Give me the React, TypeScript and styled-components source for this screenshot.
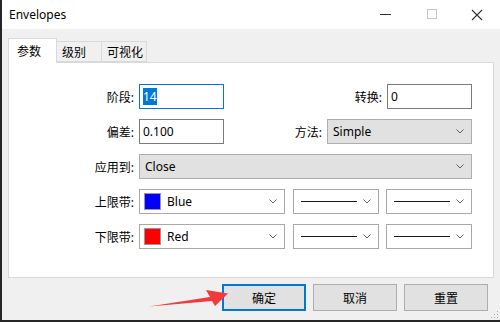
import React from 'react';
import styled, { createGlobalStyle } from 'styled-components';

const GlobalStyle = createGlobalStyle`
  html, body {
    margin: 0;
    padding: 0;
    overflow: hidden;
  }
  body {
    font-family: "Noto Sans", "Noto Sans CJK SC", sans-serif;
    font-size: 12px;
    color: #000;
  }
`;

const Chevron = () => (
  <svg width='8' height='5' viewBox='0 0 8 5'>
    <polyline points='0.5,0.5 4,4 7.5,0.5' fill='none' stroke='#606060' strokeWidth='1' />
  </svg>
);

const App = () => {
  return (
    <>
      <GlobalStyle />
      <Screen>
        <Window>
          <TitleBar>
            <Title>Envelopes</Title>
            <Controls>
              <ControlButton>
                <svg width='11' height='11' viewBox='0 0 11 11'>
                  <line x1='0' y1='5.5' x2='11' y2='5.5' stroke='#333' strokeWidth='1' />
                </svg>
              </ControlButton>
              <ControlButton>
                <svg width='11' height='11' viewBox='0 0 11 11'>
                  <rect x='1.5' y='0.5' width='9' height='9' fill='none' stroke='#c4c4c4' strokeWidth='1' />
                </svg>
              </ControlButton>
              <ControlButton>
                <svg width='12' height='12' viewBox='0 0 12 12'>
                  <path d='M1 1 L11 11 M11 1 L1 11' stroke='#333' strokeWidth='1.1' />
                </svg>
              </ControlButton>
            </Controls>
          </TitleBar>

          <Body>
            <Tabs>
              <Tab $active $width={49}>参数</Tab>
              <Tab $width={45}>级别</Tab>
              <Tab $width={45}>可视化</Tab>
            </Tabs>

            <Panel>
              <Form>
                <Label>阶段:</Label>
                <Field>
                  <TextBox $focused>
                    <Selected>14</Selected>
                  </TextBox>
                  <Group>
                    <Label>转换:</Label>
                    <TextBox>0</TextBox>
                  </Group>
                </Field>

                <Label>偏差:</Label>
                <Field>
                  <TextBox>0.100</TextBox>
                  <Group>
                    <Label>方法:</Label>
                    <Combo $width={145}>
                      <span>Simple</span>
                      <Chevron />
                    </Combo>
                  </Group>
                </Field>

                <Label>应用到:</Label>
                <Field>
                  <Combo $width={333}>
                    <span>Close</span>
                    <Chevron />
                  </Combo>
                </Field>

                <Label>上限带:</Label>
                <Field>
                  <PickBox $width={146}>
                    <ColorValue>
                      <Swatch $color='#0000ff' />
                      <span>Blue</span>
                    </ColorValue>
                    <Chevron />
                  </PickBox>
                  <PickBox $width={86}>
                    <LineSample />
                    <Chevron />
                  </PickBox>
                  <PickBox $width={86}>
                    <LineSample />
                    <Chevron />
                  </PickBox>
                </Field>

                <Label>下限带:</Label>
                <Field>
                  <PickBox $width={146}>
                    <ColorValue>
                      <Swatch $color='#ff0000' />
                      <span>Red</span>
                    </ColorValue>
                    <Chevron />
                  </PickBox>
                  <PickBox $width={86}>
                    <LineSample />
                    <Chevron />
                  </PickBox>
                  <PickBox $width={86}>
                    <LineSample />
                    <Chevron />
                  </PickBox>
                </Field>
              </Form>
            </Panel>

            <Footer>
              <Arrow width='82' height='20' viewBox='0 0 82 20'>
                <polygon
                  points='1,18.5 62,9 58,2 80,5.5 67,18 64,13'
                  fill='#f23a3a'
                />
              </Arrow>
              <Button $primary>确定</Button>
              <Button>取消</Button>
              <Button>重置</Button>
            </Footer>
          </Body>

          <Grip width='9' height='9' viewBox='0 0 9 9'>
            <rect x='7' y='1' width='1' height='1' fill='#b0b0b0' />
            <rect x='4' y='4' width='1' height='1' fill='#b0b0b0' />
            <rect x='7' y='4' width='1' height='1' fill='#b0b0b0' />
            <rect x='1' y='7' width='1' height='1' fill='#b0b0b0' />
            <rect x='4' y='7' width='1' height='1' fill='#b0b0b0' />
            <rect x='7' y='7' width='1' height='1' fill='#b0b0b0' />
          </Grip>
        </Window>
      </Screen>
    </>
  );
};

const Screen = styled.div`
  width: 500px;
  height: 322px;
  background: #262626;
  padding: 0 0 2px 2px;
  box-sizing: border-box;
  display: flex;
`;

const Window = styled.div`
  position: relative;
  width: 498px;
  height: 320px;
  display: flex;
  flex-direction: column;
  background: #f0f0f0;
`;

const TitleBar = styled.div`
  height: 29px;
  background: #fff;
  display: flex;
  align-items: center;
  justify-content: space-between;
`;

const Title = styled.div`
  padding-left: 7px;
  font-size: 12px;
  color: #000;
`;

const Controls = styled.div`
  display: flex;
  height: 100%;
`;

const ControlButton = styled.div`
  width: 46px;
  height: 29px;
  display: flex;
  align-items: center;
  justify-content: center;
`;

const Body = styled.div`
  flex: 1;
  display: flex;
  flex-direction: column;
  padding: 9px 6px 0 6px;
`;

const Tabs = styled.div`
  display: flex;
  align-items: flex-end;
  height: 25px;
  margin-bottom: -1px;
  position: relative;
  z-index: 1;
`;

const Tab = styled.div<{ $active?: boolean; $width: number }>`
  box-sizing: border-box;
  width: ${p => p.$width}px;
  height: ${p => (p.$active ? 25 : 21)}px;
  margin-bottom: ${p => (p.$active ? 0 : 1)}px;
  padding-left: ${p => (p.$active ? 8 : 5)}px;
  display: flex;
  align-items: center;
  background: ${p => (p.$active ? '#fff' : '#f0f0f0')};
  border: 1px solid #d9d9d9;
  border-bottom: ${p => (p.$active ? 'none' : '1px solid #d9d9d9')};
  border-left: ${p => (p.$active ? '1px solid #d9d9d9' : 'none')};
  font-size: 12px;
`;

const Panel = styled.div`
  box-sizing: border-box;
  height: 216px;
  background: #fff;
  border: 1px solid #d9d9d9;
  padding: 21px 19px 0 0;
`;

const Form = styled.div`
  display: grid;
  grid-template-columns: 125px 333px;
  grid-auto-rows: 25px;
  column-gap: 5px;
  row-gap: 10px;
`;

const Label = styled.div`
  display: flex;
  align-items: center;
  justify-content: flex-end;
  font-size: 12px;
  white-space: nowrap;
`;

const Field = styled.div`
  display: flex;
  align-items: center;
  justify-content: space-between;
`;

const Group = styled.div`
  display: flex;
  align-items: center;
  gap: 5px;
  height: 100%;
`;

const TextBox = styled.div<{ $focused?: boolean }>`
  box-sizing: border-box;
  width: 85px;
  height: 25px;
  display: flex;
  align-items: center;
  padding-left: 3px;
  background: #fff;
  border: 1px solid ${p => (p.$focused ? '#0078d7' : '#7a7a7a')};
  font-size: 12px;
`;

const Selected = styled.span`
  background: #0078d7;
  color: #fff;
  line-height: 17px;
`;

const Combo = styled.div<{ $width: number }>`
  box-sizing: border-box;
  width: ${p => p.$width}px;
  height: 25px;
  display: flex;
  align-items: center;
  justify-content: space-between;
  padding: 0 7px 0 5px;
  background: #e1e1e1;
  border: 1px solid #adadad;
  font-size: 12px;
`;

const PickBox = styled.div<{ $width: number }>`
  box-sizing: border-box;
  width: ${p => p.$width}px;
  height: 25px;
  display: flex;
  align-items: center;
  justify-content: space-between;
  padding: 0 7px 0 4px;
  background: #fff;
  border: 1px solid #a8a8a8;
  font-size: 12px;
`;

const ColorValue = styled.div`
  display: flex;
  align-items: center;
  gap: 6px;
`;

const Swatch = styled.div<{ $color: string }>`
  box-sizing: border-box;
  width: 17px;
  height: 17px;
  background: ${p => p.$color};
  border: 1px solid #999;
`;

const LineSample = styled.div`
  width: 56px;
  height: 1px;
  margin-left: 3px;
  background: #1a1a1a;
`;

const Footer = styled.div`
  position: relative;
  display: flex;
  justify-content: flex-end;
  gap: 7px;
  margin-top: 6px;
  padding-right: 6px;
`;

const Button = styled.div<{ $primary?: boolean }>`
  box-sizing: border-box;
  width: 84px;
  height: 27px;
  display: flex;
  align-items: center;
  justify-content: center;
  background: #e1e1e1;
  border: ${p => (p.$primary ? '2px solid #0078d7' : '1px solid #adadad')};
  font-size: 12px;
`;

const Arrow = styled.svg`
  position: absolute;
  left: 140px;
  top: 4px;
`;

const Grip = styled.svg`
  position: absolute;
  right: 1px;
  bottom: 1px;
`;

export default App;
